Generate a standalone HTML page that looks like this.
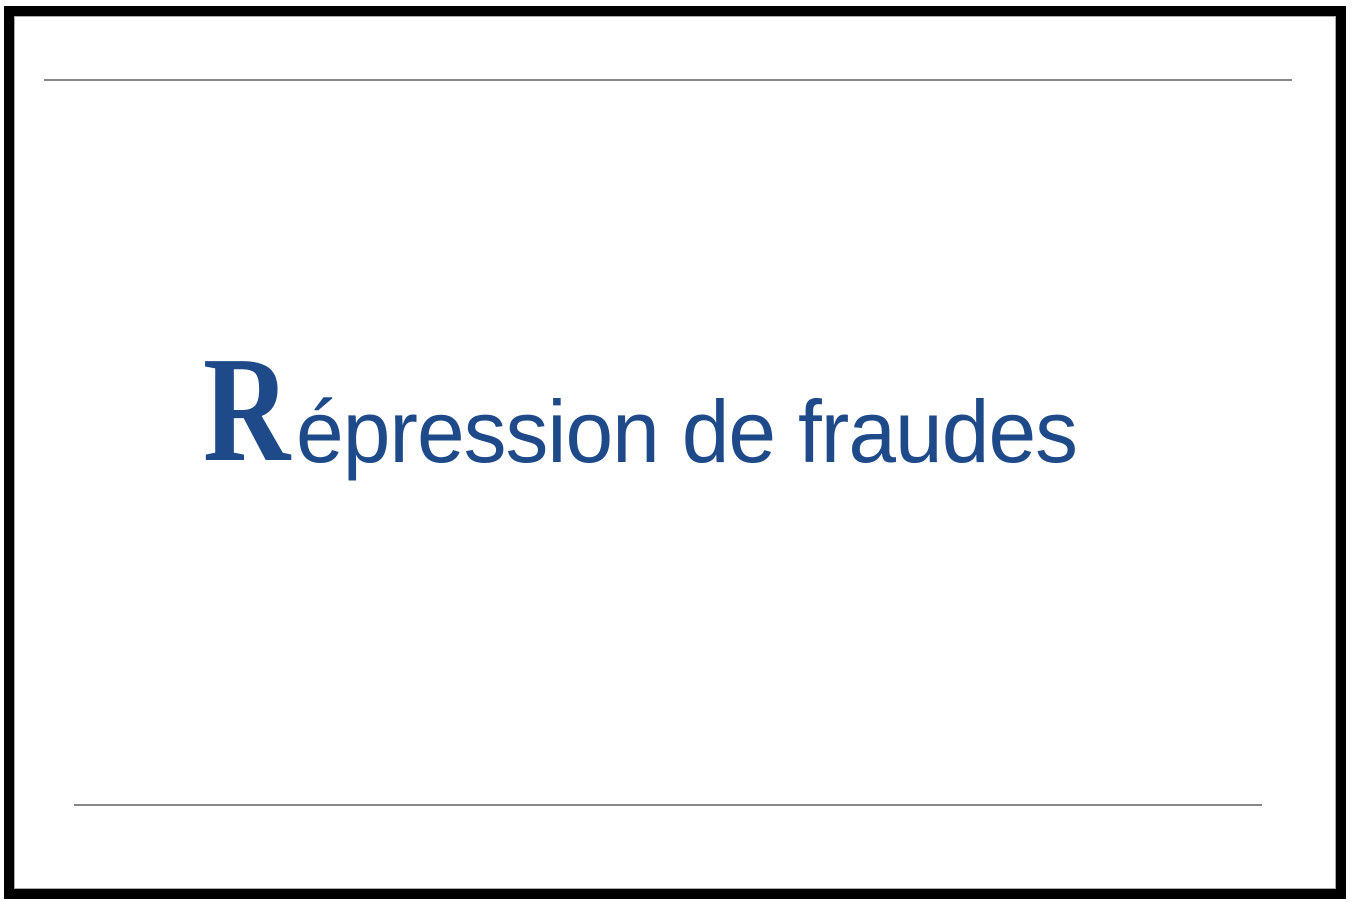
<!DOCTYPE html>
<html><head><meta charset="utf-8"><style>
html,body{margin:0;padding:0;background:#fff;width:1352px;height:902px;overflow:hidden;position:relative}
.frame{position:absolute;left:4px;top:6px;width:1322px;height:873px;border:10px solid #000;box-shadow:inset 1px 1px 0 #aaa,inset -1px -1px 0 #aaa}
.line{position:absolute;height:2px;background:#888}
.R{position:absolute;left:203px;top:409px;font-family:"Liberation Serif",serif;font-weight:bold;font-size:151px;color:#1f4a8a;line-height:0;transform-origin:left;transform:scaleX(0.8)}
.t{position:absolute;left:296px;top:432px;font-family:"Liberation Sans",sans-serif;font-size:88px;color:#1f4a8a;line-height:0;letter-spacing:-1px;transform-origin:left;transform:scaleX(0.974)}
</style></head><body>
<div class="frame"></div>
<div class="line" style="left:44px;top:79px;width:1248px"></div>
<div class="line" style="left:74px;top:804px;width:1188px"></div>
<div class="R">R</div>
<div class="t">épression de fraudes</div>
</body></html>
